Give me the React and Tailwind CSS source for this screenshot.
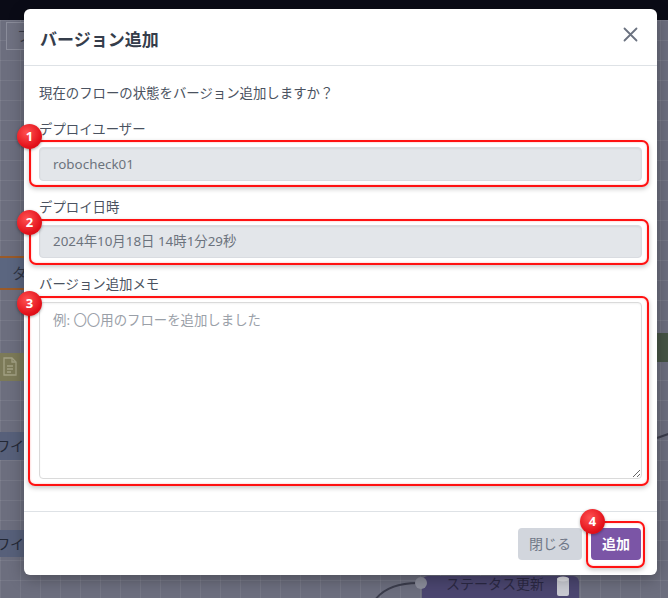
import React from "react";

function Badge({ n, className }) {
  return (
    <div
      className={
        "absolute w-[25px] h-[25px] rounded-full flex items-center justify-center text-white text-[13px] font-bold leading-none bg-[radial-gradient(circle_at_40%_35%,#ff5252,#e3111a_65%,#c8080f)] shadow-[0_1px_3px_rgba(0,0,0,0.35)] z-10 " +
        className
      }
    >
      {n}
    </div>
  );
}

function RedBox({ className }) {
  return (
    <div
      className={
        "absolute border-2 border-[#ff1212] rounded-[7px] pointer-events-none shadow-[0_2px_5px_rgba(0,0,0,0.22),inset_0_0_2px_rgba(255,80,80,0.5)] " +
        className
      }
    />
  );
}

export default function App() {
  return (
    <div className="relative w-[668px] h-[598px] overflow-hidden flex flex-col bg-[#6c6e7e] font-['Noto_Sans','Noto_Sans_CJK_JP',sans-serif]">
      <div className="h-[20px] shrink-0 bg-[#0a0b16]" />
      <div className="relative flex-1 bg-[#6c6e7e] bg-[linear-gradient(rgba(255,255,255,0.07)_1px,transparent_1px),linear-gradient(90deg,rgba(255,255,255,0.07)_1px,transparent_1px)] bg-[size:20px_20px]">
        {/* background canvas nodes */}
        <div className="absolute left-[6px] top-[2px] w-[34px] h-[28px] border border-[#8a8c9a] bg-[#6f7181] text-[#3a3d4a] text-[14px] pl-[10px] leading-[26px]">
          フ
        </div>
        <div className="absolute left-[-10px] top-[236px] w-[40px] h-[34px] bg-[#5b6680] border-y-2 border-[#9a5a28] text-[#2e3444] text-[15px] pl-[22px] leading-[30px]">
          タ
        </div>
        <div className="absolute left-[-10px] top-[333px] w-[40px] h-[28px] bg-[#7c7a58] pl-[13px] pt-[4px]">
          <svg width="14" height="19" viewBox="0 0 14 19" fill="none" stroke="#a3a184" strokeWidth="1.3">
            <path d="M1 1h8l4 4v13H1z" />
            <path d="M9 1v4h4" />
            <path d="M4 9h6M4 12h6M4 15h4" />
          </svg>
        </div>
        <div className="absolute left-[-10px] top-[412px] w-[40px] h-[28px] bg-[#57607a] text-[#232836] text-[14px] pl-[6px] leading-[28px]">
          ワイ
        </div>
        <div className="absolute left-[-10px] top-[510px] w-[40px] h-[27px] bg-[#57607a] text-[#232836] text-[14px] pl-[6px] leading-[27px]">
          ワイ
        </div>
        <div className="absolute left-[657px] top-[313px] w-[20px] h-[29px] bg-[#465446]" />
        <svg className="absolute left-[640px] top-[400px]" width="40" height="30">
          <path d="M17 18 L40 10" stroke="#3b3d4c" strokeWidth="2" fill="none" />
        </svg>
        <svg className="absolute left-[360px] top-[550px]" width="80" height="30">
          <path d="M58 13 C40 13 24 18 15 30" stroke="#3b3d4c" strokeWidth="2" fill="none" />
        </svg>
        <div className="absolute left-[422px] top-[556px] w-[157px] h-[40px] rounded-[6px] bg-[#4b4670] flex items-start">
          <span className="ml-[24px] text-[14px] text-[#2b2944] leading-[16px]">ステータス更新</span>
          <svg className="ml-auto mr-[10px]" width="12" height="20" viewBox="0 0 12 20">
            <rect x="0" y="2" width="12" height="18" rx="2" fill="#c9cad2" />
            <ellipse cx="6" cy="3" rx="6" ry="2.5" fill="#e0e1e6" />
          </svg>
        </div>
        <div className="absolute left-[415px] top-[557px] w-[12px] h-[12px] rounded-full bg-[#8b8d9b]" />
      </div>

      {/* modal */}
      <div className="absolute left-[24px] top-[9px] w-[633px] bg-white rounded-[6px] shadow-[0_4px_16px_rgba(0,0,0,0.3)] flex flex-col">
        <div className="h-[57px] border-b border-[#dee2e6] flex items-center justify-between pl-4 pr-[19px]">
          <h2 className="text-[17px] font-bold text-[#353d4b] leading-none pt-[4px]">バージョン追加</h2>
          <svg width="15" height="15" viewBox="0 0 15 15" className="mt-[-6px]">
            <path d="M1.5 1.5 L13.5 13.5 M13.5 1.5 L1.5 13.5" stroke="#6b7280" strokeWidth="1.8" strokeLinecap="round" />
          </svg>
        </div>

        <div className="px-[15px] pt-[17px] pb-4 text-[13.4px] leading-[21px] text-[#4a5260]">
          <p className="mb-[15px]">現在のフローの状態をバージョン追加しますか？</p>

          <div className="mb-4">
            <label className="block mb-[7px]">デプロイユーザー</label>
            <div className="relative">
              <RedBox className="-left-[10px] -right-[7px] -top-[7px] -bottom-[6px]" />
              <Badge n="1" className="-left-[22px] -top-[23px]" />
              <div className="h-[34px] rounded-[4px] border border-[#d9dce1] bg-[#e3e6ea] shadow-[inset_0_1px_2px_rgba(0,0,0,0.06)] px-[13px] flex items-center text-[#6c737d]">
                robocheck01
              </div>
            </div>
          </div>

          <div className="mb-4">
            <label className="block mb-[7px]">デプロイ日時</label>
            <div className="relative">
              <RedBox className="-left-[10px] -right-[7px] -top-[6px] -bottom-[7px]" />
              <Badge n="2" className="-left-[22px] -top-[15px]" />
              <div className="h-[33px] rounded-[4px] border border-[#d9dce1] bg-[#e3e6ea] shadow-[inset_0_1px_2px_rgba(0,0,0,0.06)] px-[13px] flex items-center text-[#6c737d]">
                2024年10月18日 14時1分29秒
              </div>
            </div>
          </div>

          <div className="mb-4">
            <label className="block mb-[7px]">バージョン追加メモ</label>
            <div className="relative">
              <RedBox className="-left-[11px] -right-[7px] -top-[6px] -bottom-[7px]" />
              <Badge n="3" className="-left-[22px] -top-[11px]" />
              <textarea
                className="block w-full h-[177px] rounded-[4px] border border-[#dadada] bg-white shadow-[inset_0_1px_2px_rgba(0,0,0,0.05)] px-[13px] pt-[7px] text-[13.4px] leading-[21px] text-[#4a5260] placeholder:text-[#9aa0a8] outline-none"
                placeholder="例: 〇〇用のフローを追加しました"
              />
            </div>
          </div>
        </div>

        <div className="border-t border-[#dee2e6] h-[64px] flex items-center justify-end gap-[9px] pr-4">
          <button className="w-[64px] h-[32px] rounded-[4px] bg-[#d2d6dd] text-[#707887] text-[14px]">閉じる</button>
          <div className="relative">
            <RedBox className="-left-[5px] -right-[4px] -top-[7px] -bottom-[8px]" />
            <Badge n="4" className="-left-[11px] -top-[19px]" />
            <button className="w-[50px] h-[32px] rounded-[4px] bg-[#7b55a6] text-white text-[14px] font-bold">追加</button>
          </div>
        </div>
      </div>
    </div>
  );
}
